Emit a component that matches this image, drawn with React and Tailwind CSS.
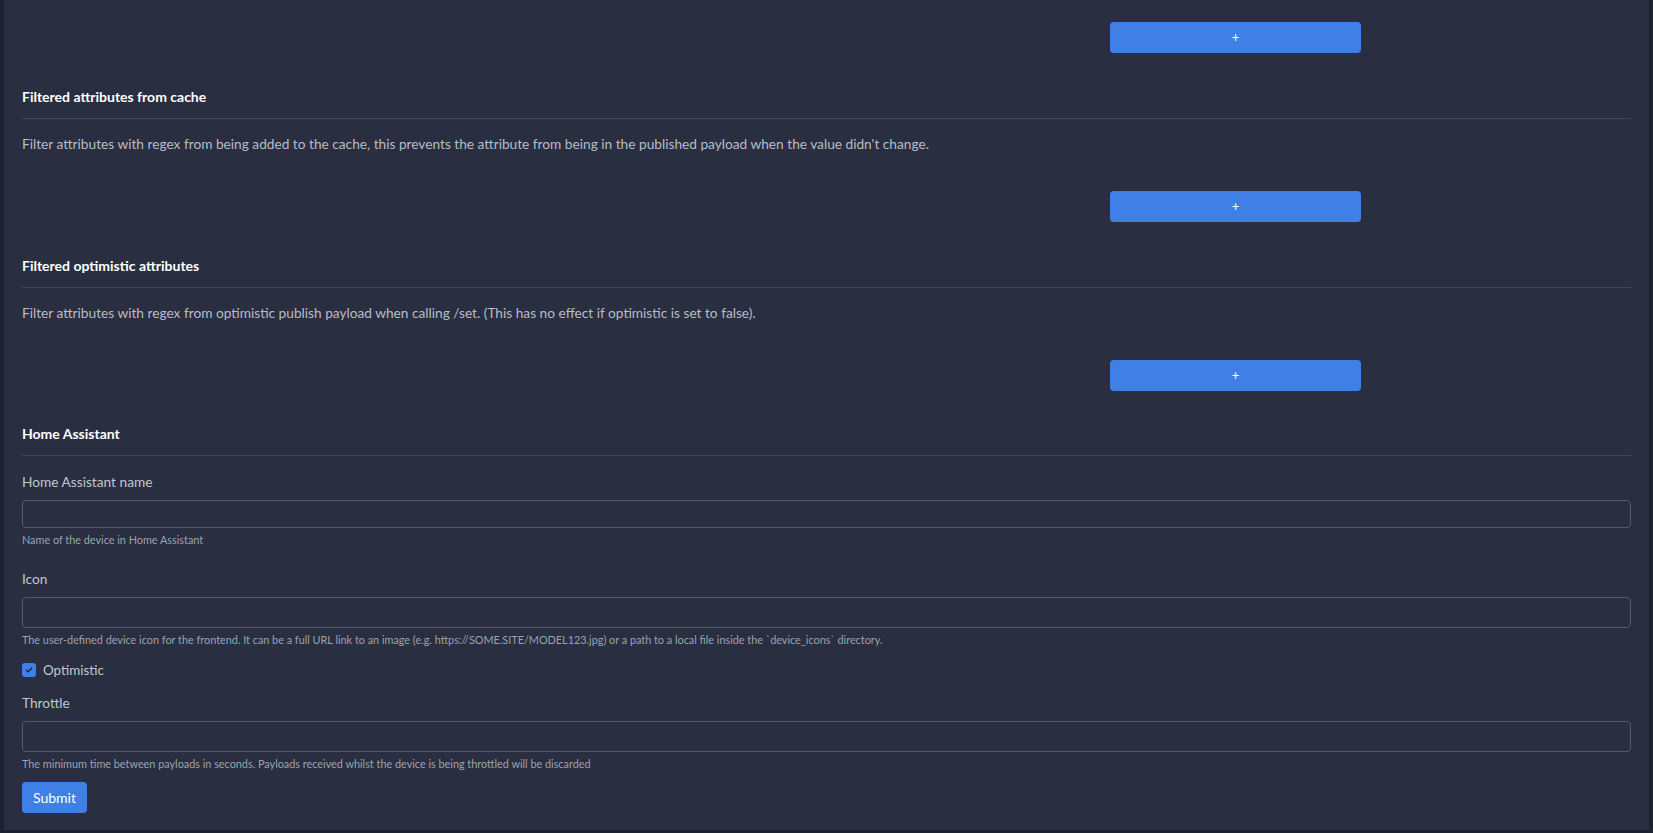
import { useState } from 'react';

const FONT = "font-['Lato',sans-serif]";

function AddButton({ className = '' }) {
  return (
    <button
      type="button"
      className={`ml-[1088px] flex h-[31px] w-[251px] items-center justify-center rounded-[4px] bg-[#4080e6] text-[13px] leading-none text-white ${className}`}
    >
      +
    </button>
  );
}

function SectionHeader({ title, className = '' }) {
  return (
    <div className={className}>
      <h3 className="text-[14px] font-bold leading-[20px] text-white">{title}</h3>
      <div className="mt-[11px] border-t border-[#41485a]" />
    </div>
  );
}

function Field({ label, help, inputClass = 'h-[31px]', className = '' }) {
  return (
    <div className={className}>
      <label className="block text-[13.7px] leading-[22px] text-[#c2c6ce]">{label}</label>
      <input
        type="text"
        className={`mt-[7px] block w-full rounded-[4px] border border-[#535a6b] bg-transparent px-2 text-[14px] text-white outline-none ${inputClass}`}
      />
      <p className="mt-[4px] text-[10.85px] leading-[16px] text-[#9da2ad]">{help}</p>
    </div>
  );
}

export default function App() {
  const [optimistic, setOptimistic] = useState(true);

  return (
    <div className={`h-[833px] overflow-hidden bg-[#1e2230] px-[4px] pb-[3px] ${FONT}`}>
      <div className="h-full bg-[#292f41] px-[18px] pt-[22px]">
        <AddButton />

        <SectionHeader title="Filtered attributes from cache" className="mt-[34px]" />
        <p className="mt-[15px] text-[13.7px] leading-[20px] text-[#b8bcc6]">
          Filter attributes with regex from being added to the cache, this prevents the attribute from being in the published payload when the value didn't change.
        </p>
        <AddButton className="mt-[37px]" />

        <SectionHeader title="Filtered optimistic attributes" className="mt-[34px]" />
        <p className="mt-[15px] text-[13.7px] leading-[20px] text-[#b8bcc6]">
          Filter attributes with regex from optimistic publish payload when calling /set. (This has no effect if optimistic is set to false).
        </p>
        <AddButton className="mt-[37px]" />

        <SectionHeader title="Home Assistant" className="mt-[33px]" />

        <Field
          className="mt-[15px]"
          label="Home Assistant name"
          inputClass="h-[28px]"
          help="Name of the device in Home Assistant"
        />
        <Field
          className="mt-[20px]"
          label="Icon"
          help="The user-defined device icon for the frontend. It can be a full URL link to an image (e.g. https://SOME.SITE/MODEL123.jpg) or a path to a local file inside the `device_icons` directory."
        />

        <label className="mt-[11px] flex items-center gap-[7px] text-[13.4px] leading-[22px] text-[#c2c6ce]">
          <span
            onClick={() => setOptimistic(!optimistic)}
            className={`flex h-[14px] w-[14px] items-center justify-center rounded-[3px] ${optimistic ? 'bg-[#4080e6]' : 'border border-[#535a6b]'}`}
          >
            {optimistic && (
              <svg viewBox="0 0 12 12" className="h-[10px] w-[10px]">
                <path d="M3 6.2l2 2 4-4.4" fill="none" stroke="#1e2a44" strokeWidth="1.8" strokeLinecap="round" strokeLinejoin="round" />
              </svg>
            )}
          </span>
          Optimistic
        </label>

        <Field
          className="mt-[11px]"
          label="Throttle"
          help="The minimum time between payloads in seconds. Payloads received whilst the device is being throttled will be discarded"
        />

        <button type="button" className="mt-[10px] h-[31px] rounded-[4px] bg-[#4080e6] px-[11px] text-[14px] text-white">
          Submit
        </button>
      </div>
    </div>
  );
}
